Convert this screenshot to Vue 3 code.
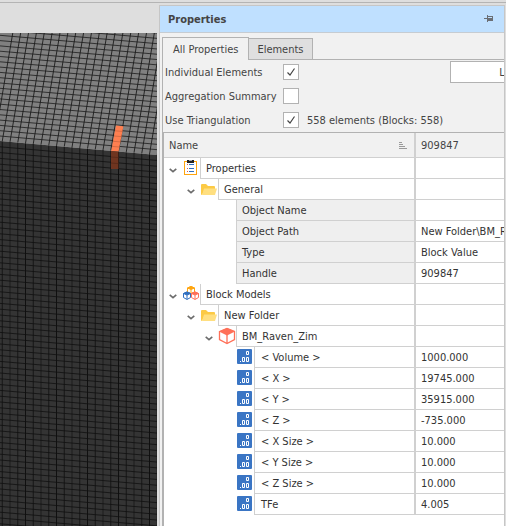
<script setup>
import { ref } from 'vue'

const individual = ref(true)
const aggregation = ref(false)
const triangulation = ref(true)
const tab = ref('all')

const rows = [
  { level: 0, open: true, icon: 'sheet', name: 'Properties', value: '' },
  { level: 1, open: true, icon: 'folder', name: 'General', value: '' },
  { level: 2, shaded: true, name: 'Object Name', value: '' },
  { level: 2, shaded: true, name: 'Object Path', value: 'New Folder\\BM_R' },
  { level: 2, shaded: true, name: 'Type', value: 'Block Value' },
  { level: 2, shaded: true, name: 'Handle', value: '909847' },
  { level: 0, open: true, icon: 'cubes', name: 'Block Models', value: '' },
  { level: 1, open: true, icon: 'folder', name: 'New Folder', value: '' },
  { level: 2, open: true, icon: 'cube', name: 'BM_Raven_Zim', value: '' },
  { level: 3, icon: 'field', name: '< Volume >', value: '1000.000' },
  { level: 3, icon: 'field', name: '< X >', value: '19745.000' },
  { level: 3, icon: 'field', name: '< Y >', value: '35915.000' },
  { level: 3, icon: 'field', name: '< Z >', value: '-735.000' },
  { level: 3, icon: 'field', name: '< X Size >', value: '10.000' },
  { level: 3, icon: 'field', name: '< Y Size >', value: '10.000' },
  { level: 3, icon: 'field', name: '< Z Size >', value: '10.000' },
  { level: 3, icon: 'field', name: 'TFe', value: '4.005' },
]

// Wireframe of the block model: a slanted top face over a vertical front face.
const PITCH = 7.75
const FALL = 0.087
const edge = (x) => 141 + FALL * x
let front = ''
let frontStrong = ''
let frontFaint = ''
let top = ''
for (let i = -4; i < 24; i++) {
  const x = 25.5 + PITCH * i
  const y = edge(x)
  const phase = ((i % 4) + 4) % 4
  const line = `M${x} ${y}V526`
  if (phase === 0) frontStrong += line
  else if (phase === 2) frontFaint += line
  else front += line
  top += `M${x} ${y}L${x + 0.17 * (y - 33)} 33`
}
let frontRows = ''
for (let y = 146.8; y < 530; y += 5.8) frontRows += `M0 ${y}L157 ${y + 157 * FALL}`
let topRows = ''
for (let y = 136; y > 12; y -= 5.3) topRows += `M0 ${y}L157 ${y + 157 * FALL}`
</script>

<template>
  <div class="app">
    <svg class="scene" viewBox="0 0 157 526" preserveAspectRatio="xMinYMin slice" aria-hidden="true">
      <path d="M0 33H157V155L0 141Z" fill="#808080" />
      <path d="M0 141L157 155V526H0Z" fill="#343434" />
      <clipPath id="topFace"><path d="M0 33H157V155L0 141Z" /></clipPath>
      <clipPath id="frontFace"><path d="M0 141L157 155V526H0Z" /></clipPath>
      <g clip-path="url(#topFace)" fill="none" stroke="#1c1c1c">
        <path :d="top" stroke-width="0.9" />
        <path :d="topRows" stroke-width="0.8" />
      </g>
      <g clip-path="url(#frontFace)" fill="none" stroke="#101010">
        <path :d="frontStrong" />
        <path :d="front" stroke-width="0.8" />
        <path :d="frontFaint" stroke="#282828" stroke-width="2" />
        <path :d="frontRows" stroke-width="0.8" />
      </g>
      <path d="M116 125.500L123.400 126.200L118.600 151.600L111.200 151Z" fill="#ff7f50" />
      <path d="M111 151L118.400 151.600V169H111Z" fill="#6f3520" />
      <path d="M115 130.800l7.400.6M114 136l7.400.6M113 141.300l7.400.6M112 146.400l7.400.6" stroke="#c4623e" stroke-width="0.7" />
      <path d="M111 157l7.400.6M111 163l7.400.6" stroke="#512717" stroke-width="0.7" />
    </svg>

    <section class="panel">
      <header class="title">
        <h1>Properties</h1>
        <button class="pin" aria-label="Auto hide">
          <svg width="10" height="8" viewBox="0 0 10 8" shape-rendering="crispEdges">
            <path d="M0 3h3V0h1v1h5v5H4v1H3V4H0zM4 2v1h4V2z" fill="#6b6f75" fill-rule="evenodd" />
          </svg>
        </button>
      </header>

      <div class="content">
        <nav class="tabs">
          <button class="tab" :class="{ active: tab === 'all' }" @click="tab = 'all'">All Properties</button>
          <button class="tab" :class="{ active: tab === 'elements' }" @click="tab = 'elements'">Elements</button>
        </nav>

        <div class="page">
          <form class="options" @submit.prevent>
            <div class="option">
              <label for="individual">Individual Elements</label>
              <span class="check">
                <input id="individual" v-model="individual" type="checkbox" />
                <svg v-if="individual" viewBox="0 0 16 16"><path d="M4.5 8.5L7 11L11.5 4.5" /></svg>
              </span>
              <button class="action" type="button">L</button>
            </div>
            <div class="option">
              <label for="aggregation">Aggregation Summary</label>
              <span class="check">
                <input id="aggregation" v-model="aggregation" type="checkbox" />
                <svg v-if="aggregation" viewBox="0 0 16 16"><path d="M4.5 8.5L7 11L11.5 4.5" /></svg>
              </span>
            </div>
            <div class="option">
              <label for="triangulation">Use Triangulation</label>
              <span class="check">
                <input id="triangulation" v-model="triangulation" type="checkbox" />
                <svg v-if="triangulation" viewBox="0 0 16 16"><path d="M4.5 8.5L7 11L11.5 4.5" /></svg>
              </span>
              <span class="count">558 elements (Blocks: 558)</span>
            </div>
          </form>

          <div class="grid">
            <table>
              <colgroup><col class="name-col" /><col /></colgroup>
              <thead>
                <tr>
                  <th>
                    <div class="head">
                      Name
                      <svg width="8" height="7" viewBox="0 0 8 7" shape-rendering="crispEdges">
                        <path d="M0 0h3v1H0zM0 2h4v1H0zM0 4h6v1H0zM0 6h8v1H0z" fill="#9a9a9a" />
                      </svg>
                    </div>
                  </th>
                  <th><div class="head">909847</div></th>
                </tr>
              </thead>
              <tbody>
                <tr v-for="row in rows" :key="row.name">
                  <td>
                    <div class="node" :class="'level-' + row.level">
                      <span v-if="row.open" class="slot arrow">
                        <svg width="8" height="5" viewBox="0 0 8 5">
                          <path d="M0.7 0.8L4 3.600L7.300 0.8" fill="none" stroke="#6c6c6c" stroke-width="1.600" />
                        </svg>
                      </span>
                      <span v-if="row.icon" class="slot">
                        <svg v-if="row.icon === 'sheet'" width="16" height="16" viewBox="0 0 16 16">
                          <rect x="1.500" y="1.500" width="12" height="13" fill="#fff" stroke="#ffa50f" />
                          <path d="M4 0h7v3H4z" fill="#222" />
                          <path d="M6 0h3v1H6z" fill="#aaa" />
                          <path d="M6 4.500h5M6 8.500h5M6 11.500h5" stroke="#2f6fc0" />
                          <path d="M4 4.500h1M4 8.500h1M4 11.500h1" stroke="#e0564a" />
                        </svg>
                        <svg v-else-if="row.icon === 'folder'" width="16" height="16" viewBox="0 0 16 16">
                          <path d="M0 4q0-1 1-1h4l2 2h6q1 0 1 1v2H4L1 14q-1 0-1-1z" fill="#fcca45" />
                          <path d="M3 7.500H16L14 14H1z" fill="#ffdf80" />
                        </svg>
                        <svg v-else-if="row.icon === 'cubes'" width="18" height="18" viewBox="0 0 18 18">
                          <g fill="#fff" stroke="#ffa50f">
                            <path d="M5.500 3L9 1.500L12.500 3V7L9 8.500L5.500 7zM9 4.500V8.500" />
                            <path d="M5.500 3L9 1.500L12.500 3L9 4.500z" fill="#ffa50f" />
                          </g>
                          <g fill="#fff" stroke="#2f6fc0">
                            <path d="M1.500 8.500L5 7L8.500 8.500V12.500L5 14.500L1.500 12.500zM5 10V14" />
                            <path d="M1.500 8.500L5 7L8.500 8.500L5 10z" fill="#2f6fc0" />
                          </g>
                          <g fill="#fff" stroke="#ff7058">
                            <path d="M9.500 8.500L13 7L16.500 8.500V12.500L13 14.500L9.500 12.500zM13 10V14" />
                            <path d="M9.500 8.500L13 7L16.500 8.500L13 10z" fill="#ff7058" />
                          </g>
                        </svg>
                        <svg v-else-if="row.icon === 'cube'" width="18" height="18" viewBox="0 0 18 18">
                          <path d="M1.500 4.500L9 1.500L16.500 4.500V12.500L9 16.500L1.500 12.500zM9 8V16" fill="#fff" stroke="#ff7058" stroke-width="1.300" />
                          <path d="M1 4.500L9 1L17 4.500L9 8.500z" fill="#ff7058" />
                        </svg>
                        <svg v-else width="16" height="16" viewBox="0 0 16 16">
                          <rect width="15" height="15" rx="1" fill="#3a75c4" />
                          <g fill="none" stroke="#fff">
                            <path d="M5.500 8.500h2v4h-2zM9.500 8.500h2v4h-2zM9.500 2.500h2v3h-2z" />
                            <path d="M3 12.500h1" />
                          </g>
                        </svg>
                      </span>
                      <span class="label" :class="{ shaded: row.shaded }">{{ row.name }}</span>
                    </div>
                  </td>
                  <td><div class="value">{{ row.value }}</div></td>
                </tr>
              </tbody>
            </table>
          </div>
        </div>
      </div>
    </section>
  </div>
</template>

<style>
body {
  margin: 0;
  background: #dedede;
}
</style>

<style scoped>
* {
  box-sizing: border-box;
}
.app {
  display: flex;
  min-height: 100vh;
  gap: 2px;
  padding-right: 1px;
  overflow: hidden;
  background: linear-gradient(#b4b4b4, #b4b4b4) 0 2px / 100% 1px no-repeat #dedede;
  color: #444;
  font: 11px/17px "DejaVu Sans Condensed", "DejaVu Sans", sans-serif;
}
button,
input {
  margin: 0;
  font: inherit;
  color: inherit;
}
.scene {
  flex: 0 0 157px;
  width: 157px;
  height: 100vh;
}
.panel {
  flex: 1;
  min-width: 0;
  display: flex;
  flex-direction: column;
  margin-top: 5px;
  border: solid #c6c6c6;
  border-width: 1px 1px 0;
  background: #f1f1f1;
}
.title {
  display: flex;
  align-items: center;
  justify-content: space-between;
  height: 27px;
  padding: 0 10px 0 8px;
  background: #bfe0ff;
  border-bottom: 1px solid #c6ccd2;
}
h1 {
  margin: 0;
  font-size: 11px;
  font-weight: 700;
}
.pin {
  display: flex;
  padding: 0;
  border: 0;
  background: none;
}
.content {
  flex: 1;
  display: flex;
  flex-direction: column;
  padding: 4px 0 0 2px;
}
.tabs {
  display: flex;
  align-items: flex-end;
  height: 23px;
  box-shadow: inset 0 -1px #b2b2b2;
}
.tab {
  height: 22px;
  padding: 0 8px;
  border: 1px solid #b2b2b2;
  border-left: 0;
  background: #dfdfdf;
  white-space: nowrap;
}
.tab.active {
  height: 23px;
  padding: 0 10px;
  border-left: 1px solid #b2b2b2;
  border-bottom: 0;
  background: #f1f1f1;
}
.page {
  flex: 1;
  display: flex;
  flex-direction: column;
  border-left: 1px solid #b2b2b2;
}
.options {
  padding-left: 2px;
  overflow: hidden;
}
.option {
  display: flex;
  align-items: center;
  height: 24px;
  white-space: nowrap;
}
.option label {
  flex: 0 0 118px;
}
.check {
  display: grid;
  flex: none;
}
.check > * {
  grid-area: 1 / 1;
  width: 16px;
  height: 16px;
}
.check input {
  appearance: none;
  border: 1px solid #b2b2b2;
  background: #fff;
}
.check svg {
  pointer-events: none;
  fill: none;
  stroke: #444;
  stroke-width: 1.2;
}
.count {
  margin-left: 8px;
}
.action {
  flex: none;
  width: 104px;
  height: 22px;
  margin-left: auto;
  margin-right: -50px;
  border: 1px solid #b2b2b2;
  background: #fff;
}
.grid {
  flex: 1;
  border: solid #b2b2b2;
  border-width: 1px 0 0 1px;
  background: #fff;
}
table {
  width: 100%;
  table-layout: fixed;
  border-collapse: separate;
  border-spacing: 0;
}
.name-col {
  width: 252px;
}
th,
td {
  padding: 0;
  text-align: left;
  font-weight: 400;
}
th:first-child,
td:first-child {
  border-right: 2px solid #d0d0d0;
}
.head {
  display: flex;
  align-items: center;
  justify-content: space-between;
  height: 25px;
  padding: 0 7px 0 5px;
  background: #f1f1f1;
  border-bottom: 1px solid #d0d0d0;
}
.node {
  display: flex;
  height: 21px;
}
.level-1 {
  padding-left: 18px;
}
.level-2 {
  padding-left: 36px;
}
.level-2:not(:has(.slot)) {
  padding-left: 72px;
}
.level-3 {
  padding-left: 72px;
}
.slot {
  display: flex;
  align-items: center;
  justify-content: center;
  flex: none;
  width: 18px;
  height: 20px;
}
.arrow {
  padding-top: 4px;
}
.label,
.value {
  height: 21px;
  padding-left: 5px;
  border-bottom: 1px solid #d0d0d0;
  line-height: 21px;
  white-space: pre;
  overflow: hidden;
  color: #333;
}
.label {
  flex: 1;
  border-left: 1px solid #d0d0d0;
}
.level-3 .label {
  padding-left: 6px;
}
.shaded {
  background: #efefef;
}
</style>
